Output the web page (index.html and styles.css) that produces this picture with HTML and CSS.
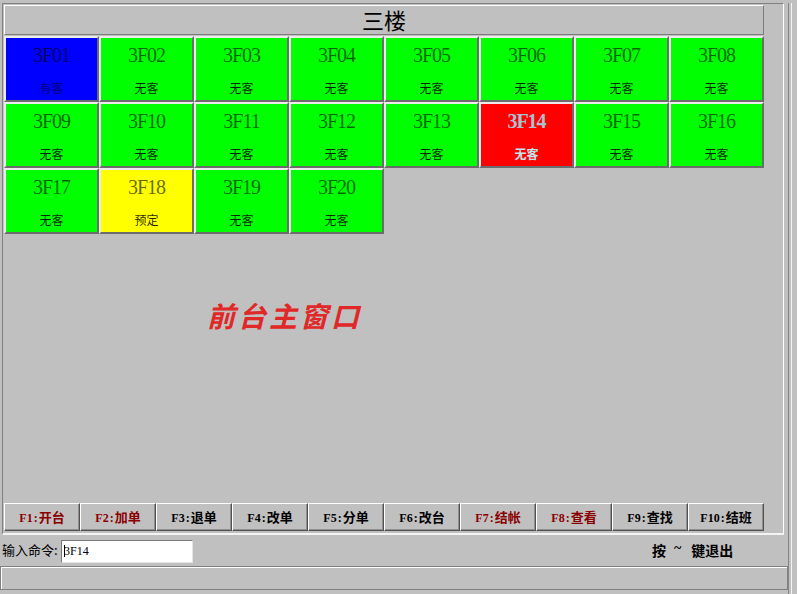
FILE: index.html
```html
<!DOCTYPE html>
<html lang="zh">
<head>
<meta charset="utf-8">
<title>前台主窗口</title>
<link rel="stylesheet" href="styles.css">
</head>
<body>
<div class="frame">
  <div class="screen">
    <div class="panel">
      <div class="title">三楼</div>
      <div class="grid">
        <div class="tile blue"><div class="name">3F01</div><div class="state">有客</div></div>
        <div class="tile green"><div class="name">3F02</div><div class="state">无客</div></div>
        <div class="tile green"><div class="name">3F03</div><div class="state">无客</div></div>
        <div class="tile green"><div class="name">3F04</div><div class="state">无客</div></div>
        <div class="tile green"><div class="name">3F05</div><div class="state">无客</div></div>
        <div class="tile green"><div class="name">3F06</div><div class="state">无客</div></div>
        <div class="tile green"><div class="name">3F07</div><div class="state">无客</div></div>
        <div class="tile green"><div class="name">3F08</div><div class="state">无客</div></div>
        <div class="tile green"><div class="name">3F09</div><div class="state">无客</div></div>
        <div class="tile green"><div class="name">3F10</div><div class="state">无客</div></div>
        <div class="tile green"><div class="name">3F11</div><div class="state">无客</div></div>
        <div class="tile green"><div class="name">3F12</div><div class="state">无客</div></div>
        <div class="tile green"><div class="name">3F13</div><div class="state">无客</div></div>
        <div class="tile red selected"><div class="name">3F14</div><div class="state">无客</div></div>
        <div class="tile green"><div class="name">3F15</div><div class="state">无客</div></div>
        <div class="tile green"><div class="name">3F16</div><div class="state">无客</div></div>
        <div class="tile green"><div class="name">3F17</div><div class="state">无客</div></div>
        <div class="tile yellow"><div class="name">3F18</div><div class="state">预定</div></div>
        <div class="tile green"><div class="name">3F19</div><div class="state">无客</div></div>
        <div class="tile green"><div class="name">3F20</div><div class="state">无客</div></div>
      </div>
      <div class="stage"><span class="big">前台主窗口</span></div>
      <div class="keys">
        <div class="key hot"><span class="fk">F1</span><span class="colon">:</span>开台</div>
        <div class="key hot"><span class="fk">F2</span><span class="colon">:</span>加单</div>
        <div class="key"><span class="fk">F3</span><span class="colon">:</span>退单</div>
        <div class="key"><span class="fk">F4</span><span class="colon">:</span>改单</div>
        <div class="key"><span class="fk">F5</span><span class="colon">:</span>分单</div>
        <div class="key"><span class="fk">F6</span><span class="colon">:</span>改台</div>
        <div class="key hot"><span class="fk">F7</span><span class="colon">:</span>结帐</div>
        <div class="key hot"><span class="fk">F8</span><span class="colon">:</span>查看</div>
        <div class="key"><span class="fk">F9</span><span class="colon">:</span>查找</div>
        <div class="key"><span class="fk">F10</span><span class="colon">:</span>结班</div>
      </div>
    </div>
    <div class="cmd">
      <span class="label">输入命令:</span>
      <div class="input"><span class="caret"></span>3F14</div>
      <span class="hint">按<span class="tilde">~</span>键退出</span>
    </div>
    <div class="status"></div>
  </div>
</div>
</body>
</html>
```
FILE: styles.css
```css
html, body {
  margin: 0;
  padding: 0;
  background: #c0c0c0;
  font-family: "Noto Sans CJK SC", "Liberation Sans", sans-serif;
}

.frame {
  width: 791px;
  height: 592px;
  border-right: 1px solid #f4f4f4;
  border-bottom: 1px solid #f4f4f4;
}

.screen {
  width: 788px;
  height: 591px;
  border-right: 1px solid #858585;
}

.panel {
  margin: 3px 0 0 2px;
  width: 760px;
  height: 526px;
  padding: 1px 19px 2px 1px;
  border-top: 1px solid #808080;
  border-left: 1px solid #808080;
  border-right: 1px solid #ffffff;
  border-bottom: 2px solid #f4f4f4;
  display: flex;
  flex-direction: column;
}

.title {
  box-sizing: border-box;
  height: 30px;
  border: 1px solid;
  border-color: #ffffff #7c7c7c #7c7c7c #ffffff;
  text-align: center;
  font-size: 22px;
  line-height: 26px;
  color: #000;
}

.grid {
  margin-top: 1px;
  display: grid;
  grid-template-columns: repeat(8, 95px);
  grid-auto-rows: 66px;
  height: 198px;
}

.tile {
  box-sizing: border-box;
  border: 2px solid;
  border-color: #ececec #6c6c6c #6c6c6c #ececec;
  padding-top: 7px;
  text-align: center;
}

.tile .name {
  font-family: "Liberation Serif", serif;
  font-size: 20px;
  line-height: 20px;
  letter-spacing: -1px;
  color: rgba(0, 0, 0, 0.6);
}

.tile .state {
  margin-top: 17px;
  font-size: 12px;
  line-height: 12px;
  color: rgba(0, 0, 0, 0.85);
}

.green { background: #00ff00; }
.blue { background: #0000ff; }
.red { background: #ff0000; }
.yellow { background: #ffff00; }

.blue .state { color: rgba(0, 0, 0, 0.55); }

.selected .name {
  color: #a9c2d0;
  font-weight: bold;
}

.selected .state {
  color: #bfe6ee;
  font-weight: bold;
}

.stage {
  flex: 1;
  box-sizing: border-box;
  padding: 64px 0 0 203px;
}

.big {
  font-size: 28px;
  line-height: 34px;
  font-weight: bold;
  font-style: italic;
  letter-spacing: 3px;
  color: #e02828;
}

.keys {
  display: flex;
  height: 28px;
}

.key {
  box-sizing: border-box;
  width: 76px;
  height: 28px;
  border: 1px solid;
  border-color: #ffffff #505050 #505050 #ffffff;
  box-shadow: inset -1px -1px 0 #909090;
  text-align: center;
  font-size: 13px;
  line-height: 25px;
  font-weight: bold;
  color: #000;
}

.key.hot { color: #8a0000; }

.fk, .colon {
  font-family: "Liberation Serif", serif;
  font-size: 12px;
  font-weight: bold;
}

.colon { margin: 0 1px; }

.cmd {
  box-sizing: border-box;
  height: 31px;
  padding-top: 5px;
  display: flex;
  align-items: flex-start;
}

.label {
  box-sizing: border-box;
  width: 61px;
  padding-left: 2px;
  font-size: 13px;
  line-height: 20px;
  color: #000;
  white-space: nowrap;
}

.input {
  box-sizing: border-box;
  width: 132px;
  height: 23px;
  background: #ffffff;
  border: 1px solid;
  border-color: #7a7a7a #e4e4e4 #e4e4e4 #7a7a7a;
  padding-left: 2px;
  font-family: "Liberation Serif", serif;
  font-size: 12px;
  line-height: 19px;
  color: #000;
  display: flex;
  align-items: flex-start;
  padding-top: 1px;
}

.caret {
  width: 1px;
  height: 12px;
  margin-top: 3px;
  background: #000;
  margin-right: -1px;
}

.hint {
  margin-left: 459px;
  font-size: 14px;
  line-height: 18px;
  font-weight: bold;
  color: #000;
  white-space: nowrap;
}

.tilde {
  font-family: "Liberation Serif", serif;
  font-weight: bold;
  margin: 0 10px 0 8px;
  vertical-align: 3px;
}

.status {
  box-sizing: border-box;
  width: 788px;
  height: 24px;
  border: 1px solid #808080;
  box-shadow: inset 1px 1px 0 #ffffff;
}
```
